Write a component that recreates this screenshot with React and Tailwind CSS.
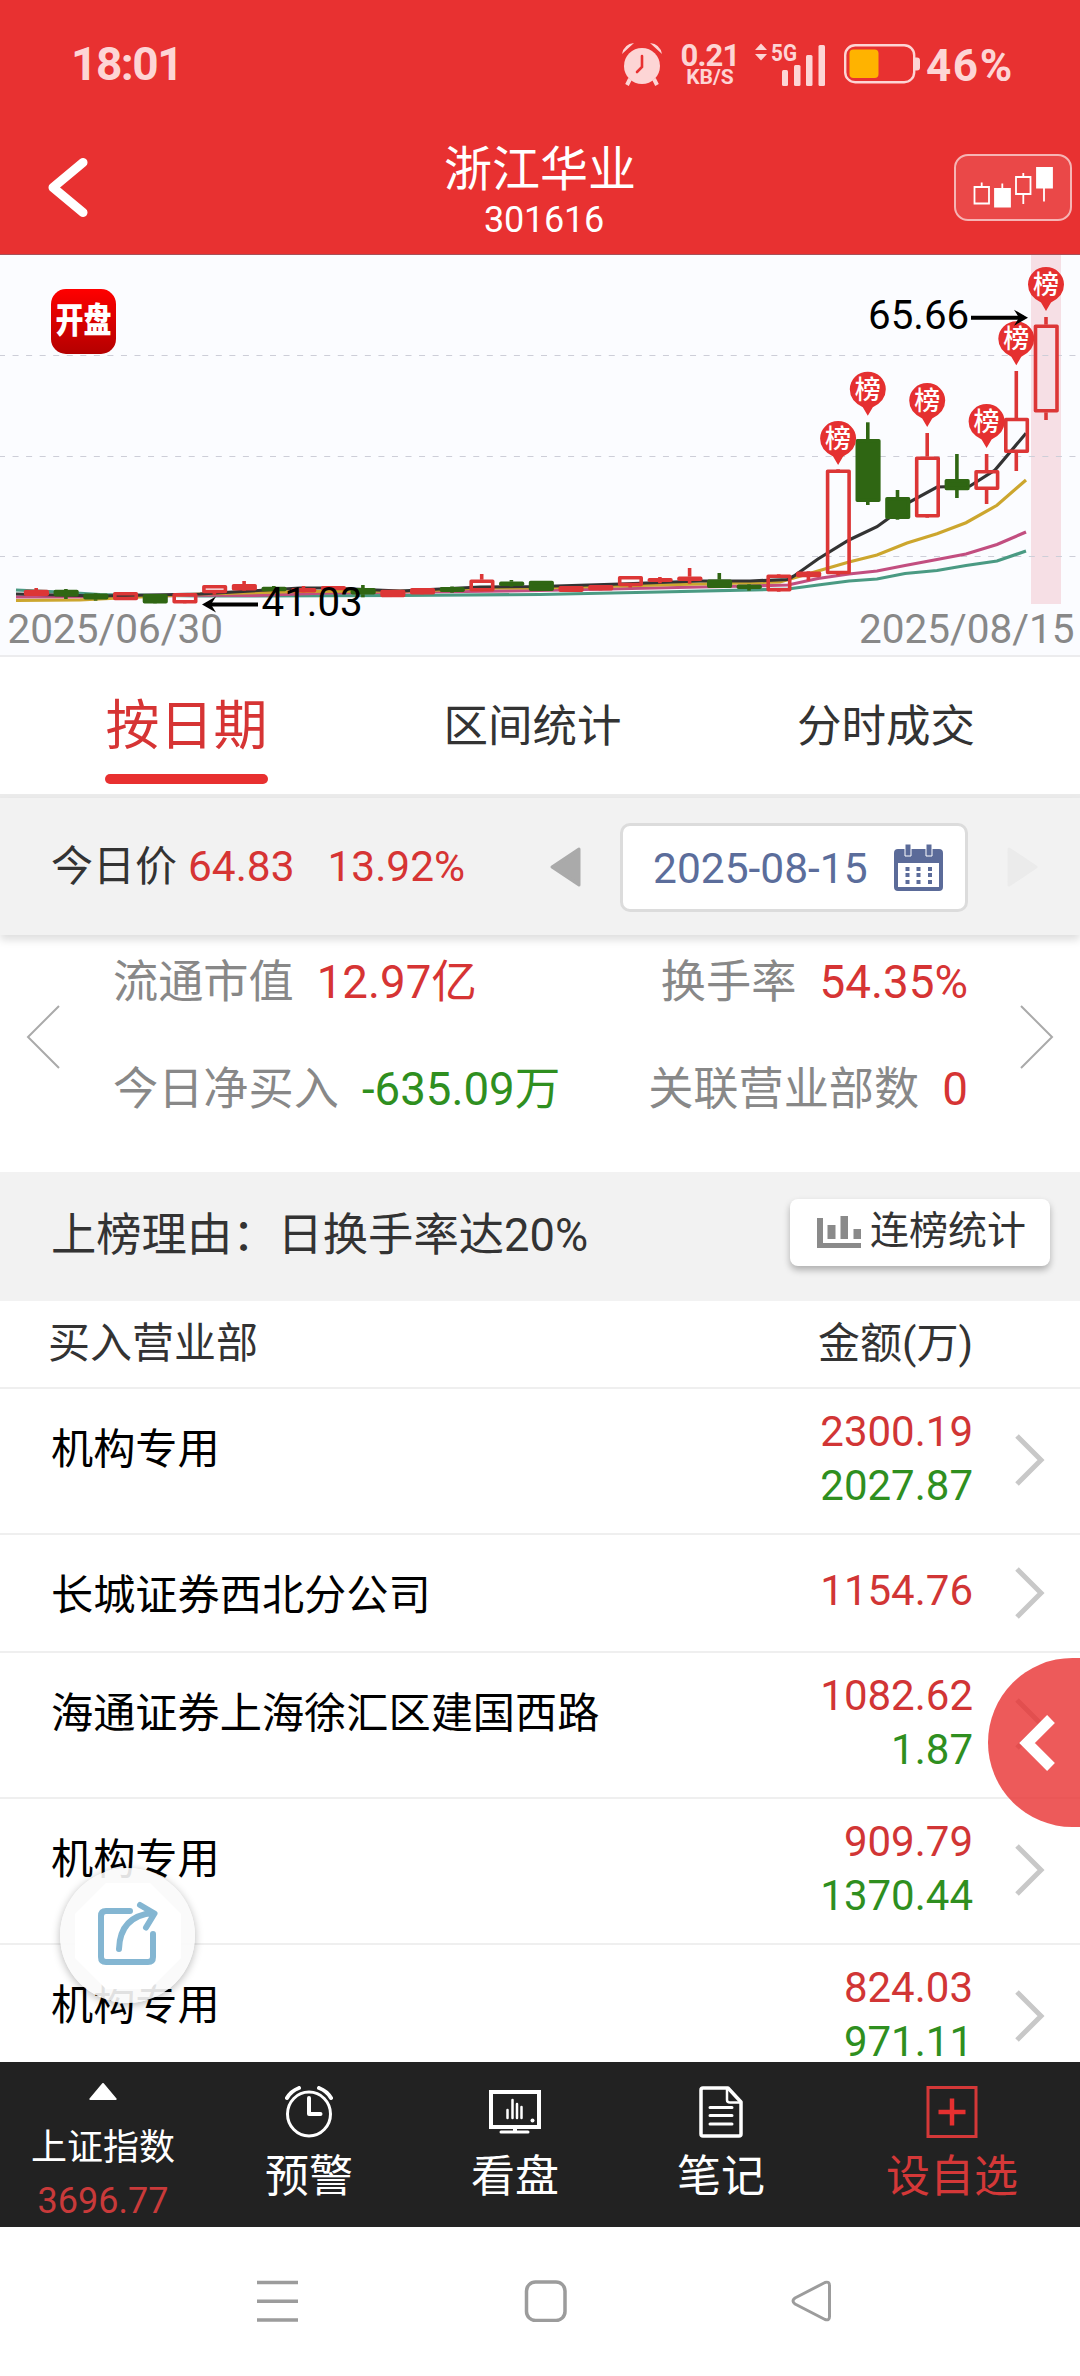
import React from "react";

// [type, bodyTop, bodyBottom, wickTop, wickBottom]
// h = hollow (up), r = small red body, g = green (down)
const candles = [
  ["r", 590, 595.7, 588, 596],
  ["g", 590, 596.3, 589, 599],
  ["g", 593.7, 599.3, 593, 600.7],
  ["h", 592.3, 600, 592, 600],
  ["g", 594.3, 603.3, 594, 603],
  ["h", 593.3, 603.3, 593, 603],
  ["h", 585.3, 593, 585, 594.7],
  ["r", 584.3, 590.3, 581, 591],
  ["g", 587, 591, 586, 591],
  ["r", 588.3, 592.3, 586, 592],
  ["r", 586.3, 590, 586, 590],
  ["g", 588.3, 594.3, 585, 597.3],
  ["r", 590, 597, 590, 597],
  ["r", 588.3, 594.3, 588, 594],
  ["g", 587.3, 591.7, 586.5, 592.7],
  ["h", 579.7, 591.3, 574, 591],
  ["g", 581.7, 585.7, 580, 586.7],
  ["g", 581, 590.7, 581, 591],
  ["r", 586.3, 591.7, 586, 592],
  ["r", 585.3, 590.3, 585, 590],
  ["h", 576.3, 586, 576, 587.5],
  ["r", 578.3, 581.7, 577, 583.3],
  ["r", 576.7, 580.7, 568, 583.7],
  ["g", 579.7, 587.7, 573, 588],
  ["g", 584.7, 588.7, 584, 590.7],
  ["h", 574.7, 591.3, 574, 592],
  ["r", 571.7, 577, 571, 580.7],
  ["h", 469.7, 574, 469, 575.5],
  ["g", 439.3, 501.7, 422.3, 505],
  ["g", 497.3, 518.7, 490, 519.7],
  ["h", 456.7, 517.3, 433, 518],
  ["g", 479.3, 490, 454, 498],
  ["h", 470.3, 489.7, 454, 504],
  ["h", 418, 452.7, 371, 471],
  ["h", 324.7, 412.3, 317, 420],
];

const pins = [
  { i: 27, y: 421 },
  { i: 28, y: 371.7 },
  { i: 30, y: 383 },
  { i: 32, y: 404 },
  { i: 33, y: 321.3 },
  { i: 34, y: 267 },
];

const averages = [
  { color: "#4a9a83", points: "16,590 60,592 100,594.5 200,596 400,595.5 540,594.5 660,592 788,589 818,585 849,581 877,579 905,573.5 937,570.5 966,565.5 997,561 1026,551" },
  { color: "#c24e80", points: "16,597 60,597 120,597 200,595 250,595.5 330,593 540,590.5 700,587 788,585 818,578.5 849,574 877,571 905,565.5 937,559.5 966,554 997,544.5 1026,532" },
  { color: "#cca62e", points: "16,600.5 80,600 120,598 200,594 300,591.5 420,591 480,588 540,588 620,586 700,584 780,582 818,571 849,562 877,555 907,543 937,533.7 966,522.7 997,505.3 1026,480" },
  { color: "#333333", points: "16,594 100,596 200,594 300,588 330,588 400,591 480,587 540,586.5 620,584 700,581 750,581 788,579.5 794,576 818,559 849,540 877,526.7 888,518.7 909.5,502 937,487 970,486 995,470 1026,433.3" },
];

const candleX = (i) => 36.2 + i * 29.7;

const rows = [
  { name: "机构专用", buy: "2300.19", sell: "2027.87" },
  { name: "长城证券西北分公司", buy: "1154.76" },
  { name: "海通证券上海徐汇区建国西路", buy: "1082.62", sell: "1.87" },
  { name: "机构专用", buy: "909.79", sell: "1370.44" },
  { name: "机构专用", buy: "824.03", sell: "971.11" },
];

function StatusBar() {
  return (
    <div className="flex h-[128px] items-center pl-[71px] pr-[63px] text-[#fdd5d5]">
      <span className="text-[46px] font-bold leading-none tracking-[-1.5px]">18:01</span>
      <div className="ml-auto flex items-center">
        <svg width="42" height="44" viewBox="0 0 42 44">
          <circle cx="21" cy="24" r="18" fill="#fdd5d5" />
          <path d="M1 12Q3 2 13 1M41 12Q39 2 29 1" fill="#fdd5d5" />
          <path d="M9 37l-3 6M33 37l3 6" stroke="#fdd5d5" strokeWidth="4" />
          <path d="M21 14v11l-5 5" fill="none" stroke="#e83131" strokeWidth="2.6" strokeLinecap="round" />
        </svg>
        <div className="ml-[18px] flex w-[58px] flex-col items-center font-bold">
          <span className="text-[31px] leading-[25px] tracking-[-0.8px]">0.21</span>
          <span className="text-[21px] leading-[18px]">KB/S</span>
        </div>
        <svg className="ml-[16px] overflow-visible" width="72" height="44" viewBox="0 0 72 44" fill="#fdd5d5">
          <path d="M0 8l6-6.500 6 6.500zM0 12h12l-6 6.500z" />
          <text x="16" y="19" fontSize="24" fontWeight="700" textLength="26" lengthAdjust="spacingAndGlyphs">5G</text>
          <rect x="27" y="28" width="6" height="16" rx="1.500" />
          <rect x="39" y="23" width="6.500" height="21" rx="1.500" />
          <rect x="51" y="13" width="6.500" height="31" rx="1.500" />
          <rect x="63.500" y="3" width="6.500" height="41" rx="1.500" />
        </svg>
        <svg className="ml-[17px]" width="78" height="40" viewBox="0 0 78 40">
          <rect x="1.200" y="1.200" width="69" height="37" rx="10" fill="none" stroke="#fdd5d5" strokeWidth="2.400" />
          <rect x="5.500" y="5.500" width="29" height="28.500" rx="4" fill="#ffb300" />
          <path d="M71 13.500h2q3 0 3 3v7q0 3-3 3h-2z" fill="#fdd5d5" />
        </svg>
        <span className="ml-[4px] mt-[3px] w-[91px] text-[44px] font-bold leading-none tracking-[1.600px]">46%</span>
      </div>
    </div>
  );
}

function Header() {
  return (
    <div className="flex h-[127px] items-start border-b border-[#a85058] text-white">
      <div className="w-[440px] pl-[46px] pt-[29px]">
        <svg width="44" height="62" viewBox="0 0 44 62">
          <path d="M37 5.500L7 30.500l30 25" fill="none" stroke="#fff" strokeWidth="9" strokeLinecap="round" strokeLinejoin="round" />
        </svg>
      </div>
      <div className="flex w-[200px] flex-col items-center whitespace-nowrap pt-[14px]">
        <span className="text-[48px] leading-[56px]">浙江华业</span>
        <span className="ml-[8px] mt-[2px] text-[36px] leading-[40px] tracking-[-0.2px]">301616</span>
      </div>
      <div className="ml-auto mr-[8px] mt-[26px] h-[67px] w-[118px] rounded-[14px] border-2 border-[#f6b4b4] bg-[#ea4848]">
        <svg width="114" height="63" viewBox="0 0 114 63" fill="none" stroke="#fff" strokeWidth="1.800">
          <path d="M18.500 31h14.500v16.500h-14.500zM25.700 31v-4.500M60 21h14.500v17h-14.500zM67.300 21v-4M67.300 38v10M46.300 32v-4.500M88 31v14.500" />
          <path d="M39 33h15v17.500h-15zM81 12h15v19.500h-15z" fill="#fff" />
        </svg>
      </div>
    </div>
  );
}

function KLineChart() {
  return (
    <div className="relative h-[402px] border-b-2 border-[#ececee] bg-[#fbfcff]">
      <svg width="1080" height="400" viewBox="0 255 1080 400">
        <rect x="1031" y="255" width="30" height="349" fill="#f6dfe5" />
        {[355.5, 456.5, 556.5].map((y) => (
          <line key={y} x1="-1" x2="1080" y1={y} y2={y} stroke="#cdced8" strokeWidth="1.2" strokeDasharray="6 7.55" />
        ))}
        {averages.map((a) => (
          <polyline key={a.color} points={a.points} fill="none" stroke={a.color} strokeWidth="3.2" />
        ))}
        {candles.map(([type, top, bottom, high, low], i) => {
          const x = candleX(i);
          const color = type === "g" ? "#2f6613" : "#dc3636";
          const hollow = type === "h";
          return (
            <g key={i} stroke={color} strokeWidth="3.6" strokeLinejoin="round">
              <line x1={x} x2={x} y1={high} y2={top} />
              <line x1={x} x2={x} y1={bottom} y2={low} />
              <rect x={x - 10.5} y={top + 1.5} width="21.5" height={Math.max(bottom - top - 3, 0.5)} fill={hollow ? "none" : color} />
            </g>
          );
        })}
        {pins.map(({ i, y }) => (
          <g key={i} transform={`translate(${candleX(i)} ${y})`}>
            <path d="M0 44L-5 35.500Q-18 29-18 17.500A18 17.500 0 0 1 18 17.500Q18 29 5 35.500Z" fill="#e53030" />
            <text x="0" y="27" textAnchor="middle" fontSize="26" fontWeight="500" fill="#fff">榜</text>
          </g>
        ))}
        <g fontSize="40.300" fill="#000">
          <text x="261.500" y="616">41.03</text>
          <text x="868" y="329">65.66</text>
        </g>
        <g fill="none" stroke="#000" strokeWidth="4">
          <path d="M258 604.500H206M971 317.700H1024" />
          <path d="M202 604.500l14-8-5 8 5 8zM1028 317.700l-14-8 5 8-5 8z" fill="#000" stroke="none" />
        </g>
        <g fontSize="40.500" fill="#888">
          <text x="7.500" y="643">2025/06/30</text>
          <text x="1074.500" y="643" textAnchor="end">2025/08/15</text>
        </g>
      </svg>
      <div className="absolute left-[51px] top-[34px] flex h-[65px] w-[65px] items-center justify-center rounded-[15px] bg-linear-to-b from-[#ff0000] to-[#b40000]">
        <span className="scale-y-[1.25] text-[28px] font-black leading-none text-white">开盘</span>
      </div>
    </div>
  );
}

function Tabs() {
  return (
    <div className="flex h-[141px] justify-between border-b-4 border-[#ebebeb] bg-white px-[105px] text-[#333]">
      <div className="flex w-[163px] flex-col items-center text-[54px] text-[#d63434]">
        <span className="mt-[38px] leading-[64px]">按日期</span>
        <div className="mt-[15px] h-[10px] w-full rounded-full bg-[#e83030]" />
      </div>
      <span className="mt-[42px] text-[44.500px] leading-[56px]">区间统计</span>
      <span className="mt-[42px] text-[44.500px] leading-[56px]">分时成交</span>
    </div>
  );
}

function DateBar() {
  return (
    <div className="relative flex h-[137px] items-center bg-[#f2f2f2] pl-[51px] text-[42px] text-[#d63434] shadow-[0_5px_8px_rgba(0,0,0,0.13)]">
      <div className="flex w-[499px] items-center">
        <span className="text-[#333]">今日价</span>
        <span className="ml-[11px] text-[42.400px]">64.83</span>
        <span className="ml-[33px] text-[42.400px]">13.92%</span>
      </div>
      <svg width="31" height="40" viewBox="0 0 31 40">
        <path d="M2 20L29 2v36z" fill="#aaa" stroke="#aaa" strokeWidth="3" strokeLinejoin="round" />
      </svg>
      <div className="ml-[39px] mt-[2px] flex h-[89px] w-[348px] items-center rounded-[10px] border-3 border-[#dcdcdc] bg-white pl-[30px] text-[42.500px] text-[#5b6d9b]">
        <span className="mt-[2px]">2025-08-15</span>
        <svg className="ml-[26px]" width="49" height="47" viewBox="0 0 49 47" fill="#5b6b99">
          <path d="M4 5h41q4 0 4 4v34q0 4-4 4H4q-4 0-4-4V9q0-4 4-4zM4 19v24h41V19z" fillRule="evenodd" />
          <path d="M11 0h6v12h-6zM32 0h6v12h-6z" stroke="#fff" strokeWidth="1" />
          <path d="M11.500 23h4v4h-4zM22.500 23h4v4h-4zM34 23h4v4h-4zM11.500 29h4v4h-4zM22.500 29h4v4h-4zM34 29h4v4h-4zM11.500 36h4v4h-4zM22.500 36h4v4h-4zM34 36h4v4h-4z" />
        </svg>
      </div>
      <svg className="ml-[39px]" width="31" height="40" viewBox="0 0 31 40">
        <path d="M29 20L2 2v36z" fill="#ebebeb" stroke="#ebebeb" strokeWidth="3" strokeLinejoin="round" />
      </svg>
    </div>
  );
}

function Summary() {
  return (
    <div className="flex h-[237px] items-start bg-white text-[45.200px] leading-[56px] text-[#888]">
      <svg className="ml-[26px] mt-[70px]" width="34" height="64" viewBox="0 0 34 64">
        <path d="M33 1L2 32l31 31" fill="none" stroke="#aaa" strokeWidth="2" />
      </svg>
      <div className="ml-[53px] mt-[20px] flex flex-col gap-[51px]">
        <div className="flex gap-[23px]">
          <span>流通市值</span>
          <span className="text-[45.600px] text-[#d63434]">12.97亿</span>
        </div>
        <div className="flex gap-[23px]">
          <span>今日净买入</span>
          <span className="text-[45.600px] text-[#2f8f1f]">-635.09万</span>
        </div>
      </div>
      <div className="ml-auto mt-[20px] flex flex-col items-end gap-[51px]">
        <div className="flex gap-[23px]">
          <span>换手率</span>
          <span className="text-[45.800px] text-[#d63434]">54.35%</span>
        </div>
        <div className="flex gap-[23px]">
          <span>关联营业部数</span>
          <span className="text-[45.800px] text-[#d63434]">0</span>
        </div>
      </div>
      <svg className="ml-[52px] mr-[26px] mt-[70px]" width="34" height="64" viewBox="0 0 34 64">
        <path d="M1 1l31 31L1 63" fill="none" stroke="#aaa" strokeWidth="2" />
      </svg>
    </div>
  );
}

function ReasonBar() {
  return (
    <div className="flex h-[129px] items-start justify-between bg-[#f2f2f2] pl-[51px] pr-[30px] text-[#333]">
      <span className="mt-[36px] text-[45.300px] leading-[56px]">上榜理由：日换手率达20%</span>
      <div className="mt-[27px] flex h-[67px] w-[260px] items-center rounded-[8px] bg-white pl-[27px] shadow-[0_4px_7px_rgba(0,0,0,0.28)]">
        <svg className="mt-[-2px]" width="44" height="32" viewBox="0 0 44 32" fill="#8a8a8a">
          <path d="M0 2h6v25h38v5H0zM10.500 9h8v14h-8zM23.500 0h7.500v23h-7.500zM36.500 13h7.500v10h-7.500z" />
        </svg>
        <span className="ml-[9px] mt-[-4px] text-[39px] leading-[50px]">连榜统计</span>
      </div>
    </div>
  );
}

function BrokerRow({ name, buy, sell }) {
  return (
    <div className={`flex items-start border-b-2 border-[#efefef] text-[42px] ${sell ? "h-[146px]" : "h-[118px]"}`}>
      <span className="ml-[51px] mt-[33px] text-[42.200px] leading-[56px] text-black">{name}</span>
      <div className={`ml-auto flex flex-col items-end leading-[54px] ${sell ? "mt-[16px]" : "mt-[29px]"}`}>
        <span className="text-[#d13535]">{buy}</span>
        {sell && <span className="text-[#2f8f1f]">{sell}</span>}
      </div>
      <svg className={`ml-[41px] mr-[34px] ${sell ? "mt-[45px]" : "mt-[32px]"}`} width="32" height="52" viewBox="0 0 32 52">
        <path d="M3 2l24 24L3 50" fill="none" stroke="#c8c8c8" strokeWidth="5" />
      </svg>
    </div>
  );
}

function BottomBar() {
  return (
    <div className="flex h-[165px] bg-[#222] text-[44px] leading-[52px] text-white">
      <div className="flex w-[206px] flex-col items-center text-[36px]">
        <svg className="mt-[21px]" width="30" height="18" viewBox="0 0 30 18">
          <path d="M15 1l13.500 16h-27z" fill="#fff" stroke="#fff" strokeWidth="2" strokeLinejoin="round" />
        </svg>
        <span className="mt-[22px]">上证指数</span>
        <span className="mt-[1px] text-[#c93a3a]">3696.77</span>
      </div>
      <div className="flex w-[206px] flex-col items-center">
        <svg className="mt-[24px]" width="48" height="52" viewBox="0 0 48 52" fill="none" stroke="#fff" strokeWidth="3">
          <ellipse cx="24" cy="28" rx="21.500" ry="22" />
          <path d="M24 12v16h11.500" strokeWidth="4" strokeLinecap="round" strokeLinejoin="round" />
          <path d="M2 12Q6 5 14 2M46 12Q42 5 34 2" strokeWidth="4" strokeLinecap="round" />
        </svg>
        <span className="mt-[13px]">预警</span>
      </div>
      <div className="flex w-[206px] flex-col items-center">
        <svg className="mt-[24px]" width="52" height="52" viewBox="0 0 52 52" fill="none" stroke="#fff">
          <path d="M2 6h48v35H2z" strokeWidth="4" />
          <path d="M26 41v6" strokeWidth="4" />
          <path d="M12 46h27" strokeWidth="3" strokeLinecap="round" />
          <path d="M18.500 24v8M23.500 14v18M28 18v14M32.500 21v11" strokeWidth="2.500" strokeLinecap="round" />
          <circle cx="43.500" cy="34.500" r="2" fill="#fff" stroke="none" />
        </svg>
        <span className="mt-[13px]">看盘</span>
      </div>
      <div className="flex w-[206px] flex-col items-center">
        <svg className="mt-[24px]" width="44" height="52" viewBox="0 0 44 52" fill="none" stroke="#fff" strokeWidth="3.500" strokeLinejoin="round">
          <path d="M4 2h25l13 14v32q0 2-2 2H4q-2 0-2-2V4q0-2 2-2z" />
          <path d="M28 3v11q0 2.500 3 2.500h10" strokeWidth="2.500" />
          <path d="M11 21.500h22M11 29.500h22M11 38h22" strokeWidth="3" strokeLinecap="round" />
        </svg>
        <span className="mt-[13px]">笔记</span>
      </div>
      <div className="flex flex-1 flex-col items-center text-[#d43838]">
        <svg className="mt-[24px]" width="52" height="52" viewBox="0 0 52 52" fill="none" stroke="#d43838">
          <path d="M2 1.500h48v49H2z" strokeWidth="3" />
          <path d="M26 12.500v27M12.500 26h27" strokeWidth="4.500" stroke="#e53030" />
        </svg>
        <span className="mt-[13px]">设自选</span>
      </div>
    </div>
  );
}

function SystemNav() {
  return (
    <div className="flex h-[149px] items-center bg-white pl-[257px]">
      <svg className="mt-[-2px]" width="574" height="42" viewBox="0 0 574 42" fill="none" stroke="#9c9c9c" strokeWidth="3.500">
        <path d="M0 2.500h41M0 21.200h41M0 40h41" />
        <rect x="269.500" y="2" width="38.500" height="38.500" rx="9" />
        <path d="M568 2.500Q572.500 1 572.500 5.500v31Q572.500 41 568 39.500L538 24Q534 21.200 538 18Z" strokeWidth="3" strokeLinejoin="round" />
      </svg>
    </div>
  );
}

export default function App() {
  return (
    <div className="relative flex h-[2376px] w-[1080px] flex-col overflow-hidden bg-white font-['Roboto','Noto_Sans_CJK_SC',sans-serif]">
      <div className="bg-[#e83131]">
        <StatusBar />
        <Header />
      </div>
      <KLineChart />
      <Tabs />
      <DateBar />
      <Summary />
      <ReasonBar />
      <div className="flex-1 overflow-hidden">
        <div className="flex h-[88px] justify-between border-b-2 border-[#efefef] pl-[48px] pr-[107px] pt-[15px] text-[42px] leading-[56px] text-[#333]">
          <span>买入营业部</span>
          <span>金额(万)</span>
        </div>
        {rows.map((row, i) => (
          <BrokerRow key={i} {...row} />
        ))}
      </div>
      <BottomBar />
      <SystemNav />

      {/* side drawer handle */}
      <div className="absolute right-0 top-[1658px] flex h-[169px] w-[92px] items-center rounded-l-full bg-[#e83131]/80 pl-[31px]">
        <svg width="38" height="56" viewBox="0 0 38 56">
          <path d="M32 4L8 28l24 24" fill="none" stroke="#fff" strokeWidth="11" />
        </svg>
      </div>

      {/* share button */}
      <div className="absolute left-[60px] top-[1868px] flex h-[135px] w-[135px] items-center justify-center rounded-full bg-[#fafafa]/90 shadow-[0_2px_8px_rgba(0,0,0,0.28)]">
        <svg width="106" height="106" viewBox="0 0 106 106">
          <path d="M31 0h44l31 31v44l-31 31H31L0 75V31z" fill="#fff" />
          <g fill="none" stroke="#84b6d2" strokeWidth="6" strokeLinecap="round" strokeLinejoin="round">
            <path d="M55 28H31q-5 0-5 5v41q0 5 5 5h42q5 0 5-5V51" />
            <path d="M44 66q1-33 34-36M65 22l14.500 8.500-8.500 14" />
          </g>
        </svg>
      </div>
    </div>
  );
}
